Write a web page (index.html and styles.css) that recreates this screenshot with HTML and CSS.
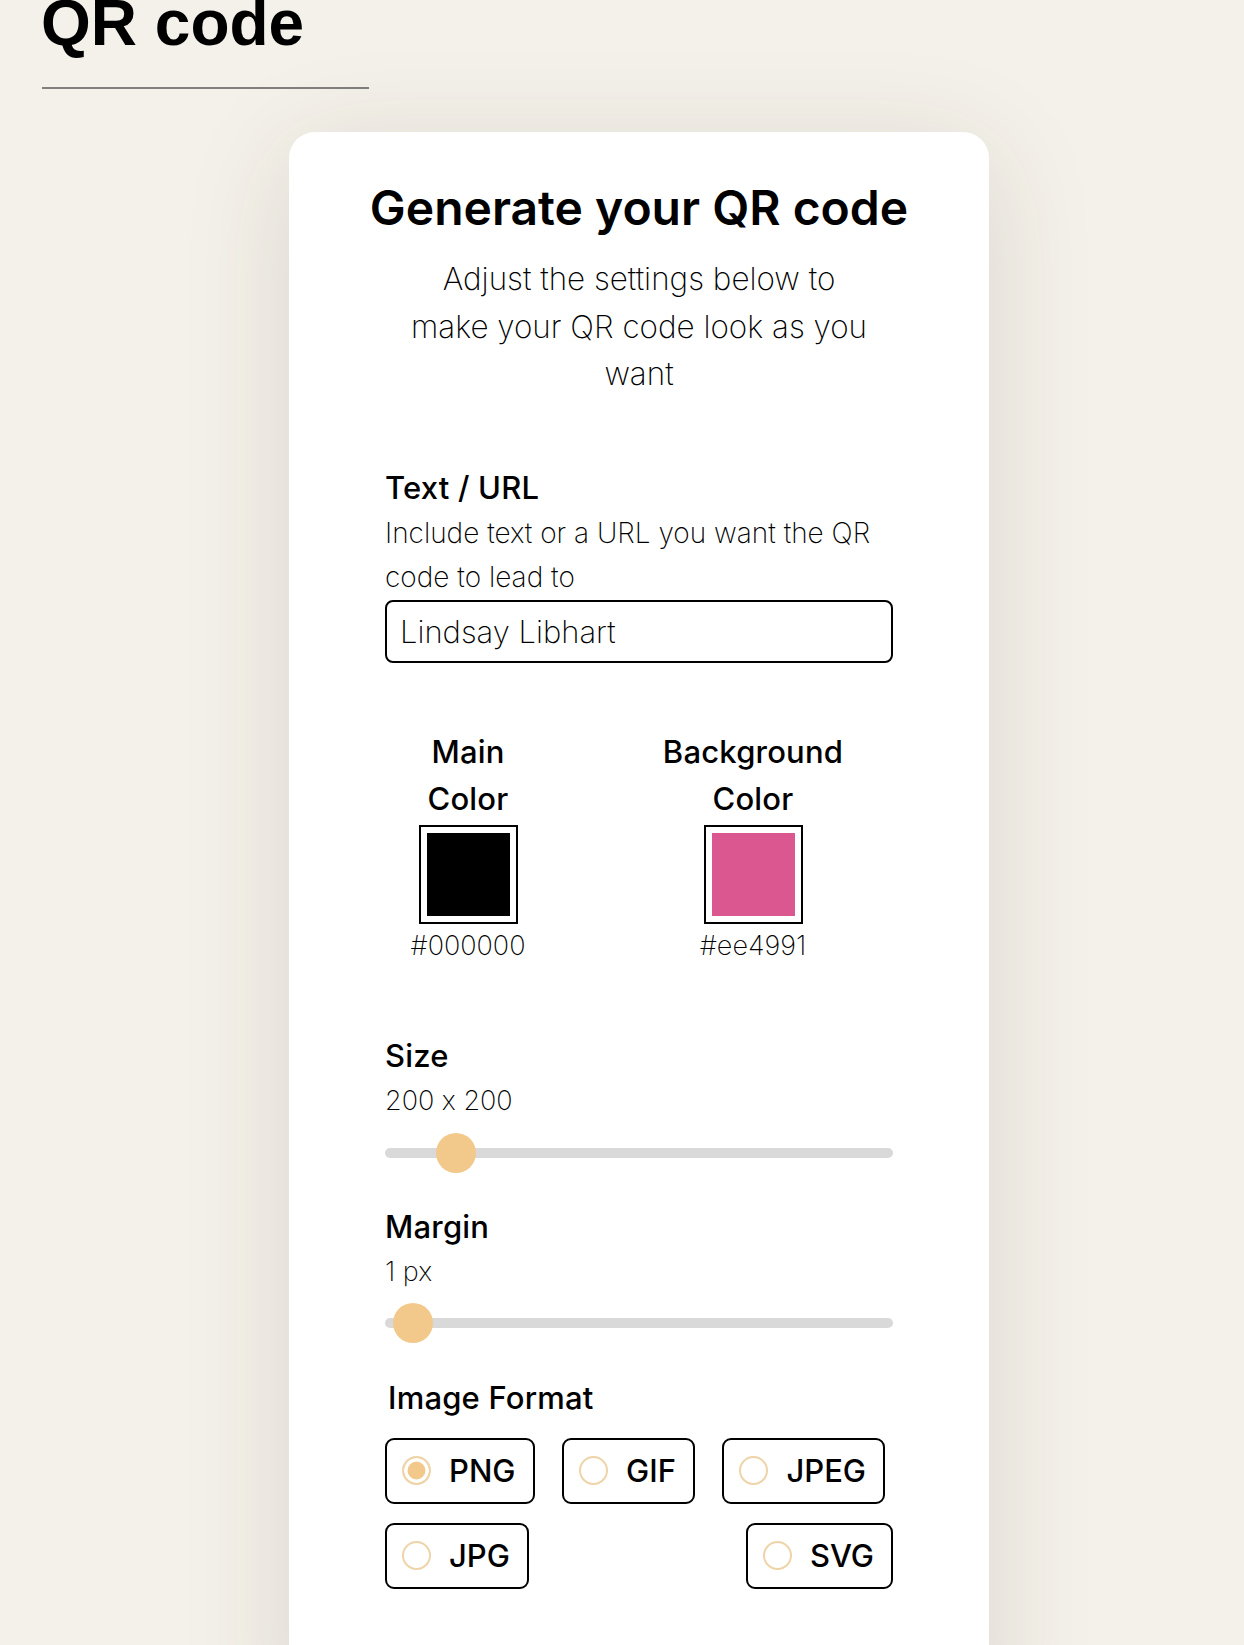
FILE: index.html
```html
<!DOCTYPE html>
<html lang="en">
<head>
<meta charset="utf-8">
<title>QR code</title>
<link rel="stylesheet" href="styles.css">
</head>
<body>
<main class="page">
  <h1 class="page-title">QR code</h1>
  <hr class="page-rule">
  <section class="card">
    <h2 class="card-title">Generate your QR code</h2>
    <p class="card-sub">Adjust the settings below to make your QR code look as you want</p>

    <div class="field field-text">
      <label class="label" for="qr-text">Text / URL</label>
      <p class="hint">Include text or a URL you want the QR code to lead to</p>
      <input class="text-input" id="qr-text" type="text" value="Lindsay Libhart">
    </div>

    <div class="colors">
      <div class="color col-main">
        <div class="label color-label">Main Color</div>
        <div class="swatch"><span class="swatch-fill fill-black"></span></div>
        <div class="hex">#000000</div>
      </div>
      <div class="color col-bg">
        <div class="label color-label">Background Color</div>
        <div class="swatch"><span class="swatch-fill fill-pink"></span></div>
        <div class="hex">#ee4991</div>
      </div>
    </div>

    <div class="field field-size">
      <label class="label" for="qr-size">Size</label>
      <div class="value">200 x 200</div>
      <input class="range" id="qr-size" type="range" min="100" max="1000" value="199">
    </div>

    <div class="field field-margin">
      <label class="label" for="qr-margin">Margin</label>
      <div class="value">1 px</div>
      <input class="range" id="qr-margin" type="range" min="0" max="58" value="1">
    </div>

    <fieldset class="formats">
      <legend class="label format-label">Image Format</legend>
      <div class="format-list">
        <label class="format"><input type="radio" name="fmt" checked><span>PNG</span></label>
        <label class="format"><input type="radio" name="fmt"><span>GIF</span></label>
        <label class="format format-jpeg"><input type="radio" name="fmt"><span>JPEG</span></label>
        <label class="format"><input type="radio" name="fmt"><span>JPG</span></label>
        <label class="format"><input type="radio" name="fmt"><span>SVG</span></label>
      </div>
    </fieldset>
  </section>
</main>
</body>
</html>
```

FILE: styles.css
```css
* { box-sizing: border-box; }

html, body {
  margin: 0;
  padding: 0;
  background: #f4f1ea;
}

.page {
  padding: 0 0 0 41px;
  height: 1645px;
  overflow: hidden;
}

.page-title {
  margin: -9px 0 0 0;
  font-family: "Liberation Sans", Arial, sans-serif;
  font-weight: 700;
  font-size: 64px;
  line-height: 64px;
  color: #000;
}

.page-rule {
  margin: 32px 0 0 1px;
  width: 327px;
  height: 2px;
  border: 0;
  background: #808080;
}

.card {
  margin: 43px 0 0 248px;
  width: 700px;
  min-height: 1600px;
  background: #fff;
  border-radius: 26px;
  padding: 48px 96px;
  box-shadow: 0 20px 110px rgba(60, 50, 30, 0.13);
  font-family: Inter, "Noto Sans", sans-serif;
  font-feature-settings: "calt" 0;
  color: #000;
}

.card-title {
  margin: 0 -60px;
  text-align: center;
  white-space: nowrap;
  font-size: 48px;
  line-height: 56px;
  font-weight: 600;
}

.card-sub {
  margin: 20px auto 0;
  width: 458px;
  text-align: center;
  font-size: 31.4px;
  line-height: 47.6px;
  font-weight: 200;
}

.label {
  display: block;
  font-size: 31px;
  line-height: 40px;
  font-weight: 500;
  letter-spacing: 0.2px;
}

.field-text { margin-top: 69px; }

.hint {
  margin: 3px 0 0;
  font-size: 28px;
  line-height: 44px;
  font-weight: 200;
}

.text-input {
  display: block;
  margin-top: 1px;
  width: 100%;
  height: 63px;
  border: 2px solid #000;
  border-radius: 8px;
  padding: 0 13px;
  font-family: inherit;
  font-size: 31px;
  font-weight: 200;
  color: #000;
  background: #fff;
  outline: none;
}

.colors {
  display: flex;
  gap: 125px;
  margin-top: 65px;
  padding-left: 18px;
}

.color {
  display: flex;
  flex-direction: column;
  align-items: center;
  text-align: center;
}

.col-main { width: 130px; }
.col-bg { width: 190px; }

.color-label { line-height: 47px; }

.swatch {
  margin-top: 3px;
  width: 99px;
  height: 99px;
  border: 2px solid #000;
  padding: 6px;
  background: #fff;
}

.swatch-fill {
  display: block;
  width: 100%;
  height: 100%;
}

.fill-black { background: #000; }
.fill-pink { background: #da5790; }

.hex {
  margin-top: 4px;
  font-size: 27px;
  line-height: 36px;
  font-weight: 200;
}

.field-size { margin-top: 72px; }
.field-margin { margin-top: 34px; }

.value {
  margin-top: 7px;
  font-size: 27px;
  line-height: 36px;
  font-weight: 200;
}

.range {
  -webkit-appearance: none;
  appearance: none;
  display: block;
  margin: 14px 0 0;
  width: 100%;
  height: 40px;
  background: transparent;
  outline: none;
}

.field-margin .range { margin-top: 13px; }

.range::-webkit-slider-runnable-track {
  height: 10px;
  border-radius: 5px;
  background: #d9d9d9;
}

.range::-webkit-slider-thumb {
  -webkit-appearance: none;
  appearance: none;
  width: 40px;
  height: 40px;
  margin-top: -15px;
  border-radius: 50%;
  border: 0;
  background: #f3c98b;
}

.formats {
  margin: 35px 0 0;
  padding: 0;
  border: 0;
  min-width: 0;
}

.format-label {
  float: left;
  width: 100%;
  padding: 0 0 0 3px;
}

.format-list {
  clear: both;
  padding-top: 20px;
  display: flex;
  flex-wrap: wrap;
  justify-content: space-between;
  row-gap: 19px;
}

.format {
  display: inline-flex;
  align-items: center;
  gap: 18px;
  height: 66px;
  padding: 0 17px 0 15px;
  border: 2px solid #000;
  border-radius: 9px;
  font-size: 31px;
  font-weight: 500;
  background: #fff;
}

.format-jpeg { margin-right: 8px; }

.format input {
  -webkit-appearance: none;
  appearance: none;
  margin: 0;
  width: 29px;
  height: 29px;
  border-radius: 50%;
  border: 2px solid #efd4a9;
  background: #fff;
  flex: none;
}

.format input:checked {
  background: #f3c98b;
  box-shadow: inset 0 0 0 3.5px #fff;
}
```
